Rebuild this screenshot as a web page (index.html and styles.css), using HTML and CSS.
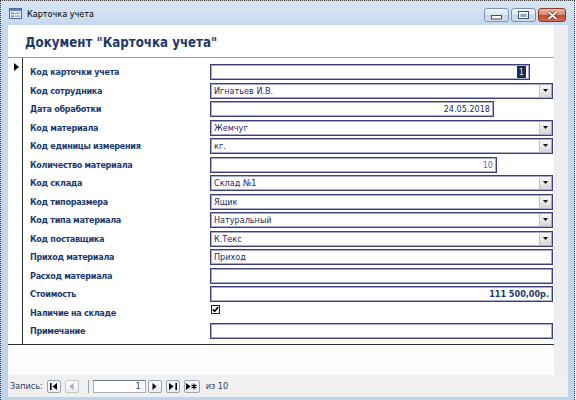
FILE: index.html
```html
<!DOCTYPE html>
<html lang="ru">
<head>
<meta charset="utf-8">
<title>Карточка учета</title>
<link rel="stylesheet" href="styles.css">
</head>
<body>
<div class="window">
  <div class="titlebar">
    <svg class="app-icon" width="13" height="11" viewBox="0 0 13 11">
      <rect x="0.5" y="0.5" width="12" height="10" fill="#e4ecf6" stroke="#4d6c9a"/>
      <rect x="1" y="1" width="11" height="2" fill="#5f83b8"/>
      <rect x="2" y="4.5" width="3" height="1.5" fill="#6d86aa"/>
      <rect x="6" y="4.5" width="5" height="1.5" fill="#9fb3cf"/>
      <rect x="2" y="7.5" width="3" height="1.5" fill="#6d86aa"/>
      <rect x="6" y="7.5" width="5" height="1.5" fill="#9fb3cf"/>
    </svg>
    <span class="title">Карточка учета</span>
    <div class="controls">
      <span class="ctl min"><svg width="11" height="5" viewBox="0 0 11 5"><rect x="0.5" y="0.5" width="10" height="3.5" fill="#fff" stroke="#3d4f6c"/></svg></span>
      <span class="ctl max"><svg width="11" height="8" viewBox="0 0 11 8"><rect x="0.5" y="0.5" width="10" height="7" fill="none" stroke="#3d4f6c"/><rect x="1.5" y="1.5" width="8" height="5" fill="none" stroke="#fff"/><rect x="2.5" y="3" width="6" height="3" fill="#8fa6c6"/></svg></span>
      <span class="ctl close"><svg width="11" height="9" viewBox="0 0 11 9"><path d="M1.5 1 L9.5 8 M9.5 1 L1.5 8" stroke="#5a1f14" stroke-width="3.2"/><path d="M1.5 1 L9.5 8 M9.5 1 L1.5 8" stroke="#fff" stroke-width="1.8"/></svg></span>
    </div>
  </div>
  <div class="client">
    <div class="upper">
      <div class="form-area">
        <div class="header"><h1 class="heading">Документ "Карточка учета"</h1></div>
        <div class="detail">
          <div class="selector"><svg width="5" height="8" viewBox="0 0 5 8"><polygon points="0,0 5,4 0,8" fill="#000"/></svg></div>
          <div class="rows">
            <div class="lbl">Код карточки учета</div>
            <div class="field w-code right"><span class="sel">1</span></div>

            <div class="lbl">Код сотрудника</div>
            <div class="field combo"><span class="val">Игнатьев И.В.</span><span class="drop"><svg width="5" height="4" viewBox="0 0 5 4"><polygon points="0,0 5,0 2.5,3" fill="#000"/></svg></span></div>

            <div class="lbl">Дата обработки</div>
            <div class="field w-date right"><span class="val">24.05.2018</span></div>

            <div class="lbl">Код материала</div>
            <div class="field combo"><span class="val">Жемчуг</span><span class="drop"><svg width="5" height="4" viewBox="0 0 5 4"><polygon points="0,0 5,0 2.5,3" fill="#000"/></svg></span></div>

            <div class="lbl">Код единицы измерения</div>
            <div class="field combo"><span class="val">кг.</span><span class="drop"><svg width="5" height="4" viewBox="0 0 5 4"><polygon points="0,0 5,0 2.5,3" fill="#000"/></svg></span></div>

            <div class="lbl">Количество материала</div>
            <div class="field w-qty right"><span class="val light">10</span></div>

            <div class="lbl">Код склада</div>
            <div class="field combo"><span class="val">Склад №1</span><span class="drop"><svg width="5" height="4" viewBox="0 0 5 4"><polygon points="0,0 5,0 2.5,3" fill="#000"/></svg></span></div>

            <div class="lbl">Код типоразмера</div>
            <div class="field combo"><span class="val">Ящик</span><span class="drop"><svg width="5" height="4" viewBox="0 0 5 4"><polygon points="0,0 5,0 2.5,3" fill="#000"/></svg></span></div>

            <div class="lbl">Код типа материала</div>
            <div class="field combo"><span class="val">Натуральный</span><span class="drop"><svg width="5" height="4" viewBox="0 0 5 4"><polygon points="0,0 5,0 2.5,3" fill="#000"/></svg></span></div>

            <div class="lbl">Код поставщика</div>
            <div class="field combo"><span class="val">К.Текс</span><span class="drop"><svg width="5" height="4" viewBox="0 0 5 4"><polygon points="0,0 5,0 2.5,3" fill="#000"/></svg></span></div>

            <div class="lbl">Приход материала</div>
            <div class="field"><span class="val">Приход</span></div>

            <div class="lbl">Расход материала</div>
            <div class="field"></div>

            <div class="lbl">Стоимость</div>
            <div class="field right"><span class="val money">111 500,00р.</span></div>

            <div class="lbl">Наличие на складе</div>
            <div class="checkcell"><span class="checkbox"><svg width="7" height="7" viewBox="0 0 7 7"><path d="M0.8 3.4 L2.7 5.4 L6.2 1" fill="none" stroke="#000" stroke-width="1.6"/></svg></span></div>

            <div class="lbl">Примечание</div>
            <div class="field"></div>
          </div>
        </div>
        <div class="footer"></div>
      </div>
      <div class="strip"></div>
    </div>
    <div class="nav">
      <span class="nav-label">Запись:</span>
      <span class="nbtn"><svg width="8" height="7" viewBox="0 0 8 7"><rect x="0" y="0" width="1.6" height="7" fill="#000"/><polygon points="7,0 7,7 2.5,3.5" fill="#000"/></svg></span>
      <span class="nbtn dis"><svg width="5" height="7" viewBox="0 0 5 7"><polygon points="4.5,0 4.5,7 0.5,3.5" fill="#a9a9a9"/></svg></span>
      <span class="nsep"></span>
      <span class="ninput">1</span>
      <span class="nbtn"><svg width="5" height="7" viewBox="0 0 5 7"><polygon points="0.5,0 0.5,7 4.5,3.5" fill="#000"/></svg></span>
      <span class="nbtn"><svg width="8" height="7" viewBox="0 0 8 7"><polygon points="0,0 0,7 4.5,3.5" fill="#000"/><rect x="6.4" y="0" width="1.6" height="7" fill="#000"/></svg></span>
      <span class="nbtn wide"><svg width="11" height="7" viewBox="0 0 11 7"><polygon points="0,0 0,7 4.5,3.5" fill="#000"/><path d="M8 0.5 V6.5 M5.5 2 L10.5 5 M10.5 2 L5.5 5" stroke="#000" stroke-width="1.1"/></svg></span>
      <span class="nav-of">из 10</span>
    </div>
  </div>
</div>
</body>
</html>
```
FILE: styles.css
```css
* { box-sizing: border-box; }
html, body { margin: 0; padding: 0; }
body {
  width: 576px;
  height: 400px;
  overflow: hidden;
  background: #ffffff;
  font-family: "DejaVu Sans Condensed", "DejaVu Sans", sans-serif;
}
.window {
  width: 575px;
  height: 400px;
  border: 1px dotted #3a3a3a;
  border-bottom: none;
  background: linear-gradient(#dae6f4, #c7d9ee 24px, #c0d3ea);
  display: flex;
  flex-direction: column;
}
.titlebar {
  height: 24px;
  flex: none;
  display: flex;
  align-items: center;
  padding: 0 8px 0 8px;
}
.app-icon { margin-right: 5px; margin-top: 1px; }
.title { flex: 1; font-size: 9px; color: #000; margin-top: 2px; }
.controls {
  display: flex;
  gap: 2px;
  align-self: flex-start;
  margin-top: 7px;
}
.ctl {
  height: 14px;
  border-radius: 3px;
  display: flex;
  align-items: center;
  justify-content: center;
}
.ctl.min, .ctl.max {
  width: 25px;
  border: 1px solid #7d91b0;
  background: linear-gradient(#f1f5fb, #d9e4f1 50%, #c4d4ea 51%, #d3dff0);
}
.ctl.min svg { margin-top: 4px; }
.ctl.close {
  width: 28px;
  border: 1px solid #8a3a2b;
  background: linear-gradient(#ecb6a8, #d98470 50%, #c5482f 51%, #d4694f);
}
.client {
  height: 372px;
  flex: none;
  margin: 0 6px 0 7px;
  background: #ffffff;
  display: flex;
  flex-direction: column;
}
.upper {
  flex: 1;
  display: flex;
}
.form-area {
  width: 546px;
  display: flex;
  flex-direction: column;
}
.header {
  height: 32px;
  flex: none;
  display: flex;
  align-items: center;
  padding-left: 17px;
}
.heading {
  margin: 2px 0 0 0;
  font-size: 13.2px;
  font-weight: bold;
  color: #1d3865;
}
.detail {
  height: 288px;
  flex: none;
  display: flex;
  border-top: 1px solid #9a9a9a;
  border-bottom: 1px solid #2f2f2f;
}
.selector {
  width: 15px;
  border-right: 1px solid #2f2f2f;
  padding: 5px 0 0 6px;
}
.selector svg { display: block; }
.footer { flex: 1; background: #fdfdfd; }
.strip { flex: 1; background: #eceef1; }
.rows {
  flex: 1;
  display: grid;
  grid-template-columns: 187px 1fr;
  grid-auto-rows: 18.5px;
  padding-top: 5px;
  align-items: center;
}
.lbl {
  padding-left: 7px;
  font-size: 9px;
  font-weight: bold;
  letter-spacing: -0.3px;
  color: #1d3a6d;
  white-space: nowrap;
}
.field {
  height: 16px;
  width: 343px;
  border: 1px solid #3e3e7c;
  box-shadow: inset 0 0 0 1px #a9a9cc;
  background: #fff;
  display: flex;
  align-items: center;
  padding: 0 3px;
  font-size: 9px;
  color: #1c2b5c;
  white-space: nowrap;
}
.field.right { justify-content: flex-end; }
.w-code { width: 320px; }
.w-date { width: 284px; }
.w-qty { width: 287px; }
.val.light { color: #5a6d96; }
.val.money { font-weight: bold; color: #233a6a; }
.sel {
  background: #1b2a58;
  color: #d7f0bf;
  padding: 0 2px;
  line-height: 12px;
  margin-right: 0;
}
.combo { padding-right: 1px; }
.combo .val { flex: 1; }
.drop {
  width: 12px;
  height: 12px;
  display: flex;
  align-items: center;
  justify-content: center;
  background: linear-gradient(#fbfbfb, #e9e9e9 50%, #d6d6d6);
  border-left: 1px solid #c4c4c4;
}
.checkcell { display: flex; align-items: center; padding-left: 1px; }
.checkbox {
  width: 9px;
  height: 9px;
  border: 1px solid #222;
  background: #fff;
  display: flex;
  align-items: center;
  justify-content: center;
  margin-top: -6px;
}
.nav {
  height: 22px;
  flex: none;
  background: #f0f0f0;
  display: flex;
  align-items: center;
  padding-left: 2px;
  font-size: 9px;
  color: #2c3c60;
}
.nav-label { margin-right: 4px; }
.nbtn {
  width: 14px;
  height: 13px;
  border: 1px solid #98a3b5;
  border-radius: 2px;
  background: linear-gradient(#ffffff, #ececec);
  display: flex;
  align-items: center;
  justify-content: center;
  margin-right: 4px;
}
.nbtn.wide { width: 16px; }
.nbtn.dis { border-color: #c3c8d0; }
.nsep {
  width: 1px;
  height: 13px;
  background: #9aa3b0;
  margin: 0 4px 0 5px;
}
.ninput {
  width: 53px;
  height: 13px;
  border: 1px solid #a5adba;
  border-top-color: #6f7785;
  background: #fff;
  text-align: right;
  padding-right: 4px;
  line-height: 11px;
  margin-right: 2px;
}
.nav-of { margin-left: 2px; }
```
